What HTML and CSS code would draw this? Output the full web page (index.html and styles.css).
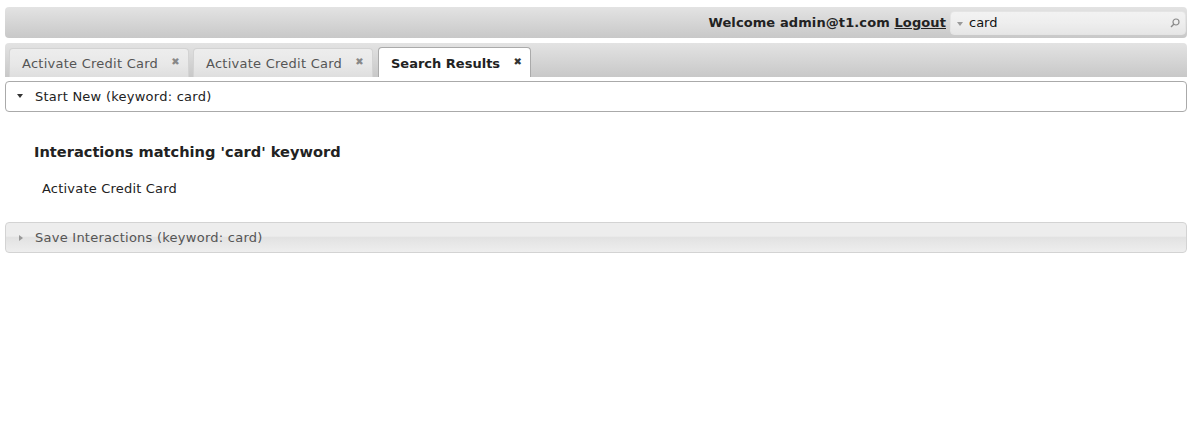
FILE: index.html
```html
<!DOCTYPE html>
<html>
<head>
<meta charset="utf-8">
<link rel="stylesheet" href="styles.css">
</head>
<body>
<div class="topbar">
  <span class="welcome">Welcome admin@t1.com <a class="logout" href="#">Logout</a></span>
  <div class="search">
    <span class="caret"></span>
    <span class="query">card</span>
    <svg class="magnifier" width="10" height="10" viewBox="0 0 10 10"><circle cx="6" cy="4" r="3" fill="none" stroke="#8a8a8a" stroke-width="1.2"/><path d="M4 6 L1 9" stroke="#8a8a8a" stroke-width="1.4"/></svg>
  </div>
</div>
<div class="tabbar">
  <div class="tab"><span>Activate Credit Card</span><span class="close">✖</span></div>
  <div class="tab"><span>Activate Credit Card</span><span class="close">✖</span></div>
  <div class="tab active"><span>Search Results</span><span class="close">✖</span></div>
</div>
<div class="acc-header open"><span class="tri-down"></span>Start New (keyword: card)</div>
<div class="acc-content">
  <h3 class="heading">Interactions matching 'card' keyword</h3>
  <div class="item">Activate Credit Card</div>
</div>
<div class="acc-header closed"><span class="tri-right"></span>Save Interactions (keyword: card)</div>
</body>
</html>
```
FILE: styles.css
```css
html, body { background: #fff; }
body {
  margin: 7px 6px 0 5px;
  font-family: "DejaVu Sans", Verdana, sans-serif;
  font-size: 13px;
  letter-spacing: 0.25px;
  color: #222;
}
.topbar {
  height: 31px;
  border-radius: 4px;
  background: linear-gradient(#e3e3e3, #c8c8c8);
  display: flex;
  justify-content: flex-end;
  align-items: center;
  padding-right: 1px;
}
.welcome {
  font-weight: bold;
  color: #222;
  margin-right: 4px;
  letter-spacing: 0.1px;
}
.logout { color: #222; text-decoration: underline; }
.search {
  width: 236px;
  height: 24px;
  box-sizing: border-box;
  border-radius: 4px;
  border: 1px solid #e4e4e4;
  background: linear-gradient(#f2f2f2 0%, #eeeeee 50%, #e6e6e6 100%);
  display: flex;
  align-items: center;
  padding: 0 5px 0 6px;
}
.caret {
  width: 0; height: 0;
  border-left: 3px solid transparent;
  border-right: 3px solid transparent;
  border-top: 4px solid #9a9a9a;
  margin-top: 2px;
  margin-right: 6px;
}
.query { flex: 1; color: #111; font-size: 13px; letter-spacing: 0; }
.magnifier { display: block; }
.tabbar {
  margin-top: 5px;
  height: 34px;
  box-sizing: border-box;
  padding: 5px 4px 0 4px;
  border-radius: 4px 4px 0 0;
  background: linear-gradient(#e3e3e3, #c8c8c8);
  display: flex;
  gap: 4px;
  align-items: flex-end;
}
.tab {
  height: 29px;
  box-sizing: border-box;
  border: 1px solid #d3d3d3;
  border-bottom: none;
  border-radius: 4px 4px 0 0;
  background: linear-gradient(#ededed 0%, #e8e8e8 55%, #dedede 100%);
  color: #555;
  display: flex;
  align-items: center;
  padding: 1px 8px 0 12px;
  width: 180px;
  justify-content: space-between;
}
.tab.active {
  background: #fff;
  border-color: #aaa;
  color: #222;
  font-weight: bold;
  width: 153px;
  margin-left: 1px;
  height: 30px;
  letter-spacing: 0;
}
.close { font-size: 10px; color: #888; font-weight: normal; margin-top: -4px; }
.tab.active .close { color: #333; }
.acc-header {
  margin-top: 4px;
  height: 31px;
  box-sizing: border-box;
  border: 1px solid #aaa;
  border-radius: 4px;
  background: #fff;
  display: flex;
  align-items: center;
  padding-left: 11px;
  color: #222;
}
.acc-header.closed {
  margin-top: 0;
  border-color: #d3d3d3;
  background: linear-gradient(#ededed 0%, #ededed 45%, #e2e2e2 50%, #eeeeee 100%);
  color: #555;
}
.tri-down {
  width: 0; height: 0;
  border-left: 3.5px solid transparent;
  border-right: 3.5px solid transparent;
  border-top: 4px solid #333;
  margin-right: 12px;
  margin-top: -1px;
}
.tri-right {
  width: 0; height: 0;
  border-top: 3.5px solid transparent;
  border-bottom: 3.5px solid transparent;
  border-left: 4px solid #999;
  margin-right: 12px;
  margin-left: 2px;
}
.acc-content {
  padding: 30px 0 23px 29px;
}
.heading {
  margin: 0;
  font-size: 14.6px;
  font-weight: bold;
  color: #222;
  line-height: 20px;
  letter-spacing: 0;
}
.item {
  margin-top: 17px;
  padding-left: 8px;
  line-height: 20px;
  letter-spacing: 0.2px;
}
```
